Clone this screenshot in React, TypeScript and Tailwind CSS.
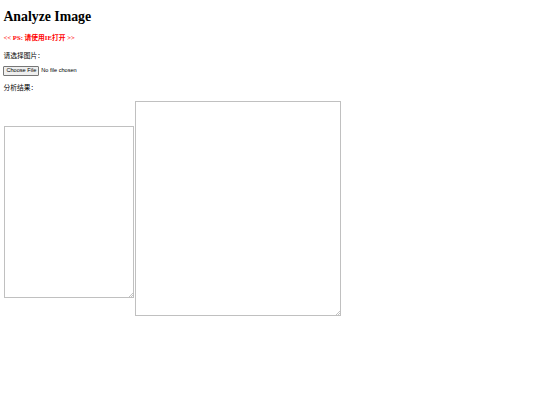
function Grip() {
  return (
    <svg className="pointer-events-none absolute right-[1px] bottom-[1px] h-[4px] w-[4px]" viewBox="0 0 4 4">
      <path d="M4 0L0 4M4 2L2 4" stroke="#9a9a9a" strokeWidth="0.6" />
    </svg>
  )
}

export default function App() {
  return (
    <div className="min-h-[405px] bg-white px-[3.4px] font-['Liberation_Serif','Noto_Sans_CJK_SC',serif] text-[6.75px] leading-[1.15] text-black">
      <h1 className="pt-[9px] text-[13.8px] leading-[1.15] font-bold">Analyze Image</h1>

      <p className="mt-[9px] font-bold text-[#ff0000]">&lt;&lt; PS: 请使用IE打开 &gt;&gt;</p>

      <p className="mt-[10px]">请选择图片：</p>

      <div className="mt-[6.5px] flex items-center gap-[2px] font-['Liberation_Sans',sans-serif] text-[5.6px] leading-none">
        <span className="rounded-[1px] border border-[#767676] bg-[#efefef] px-[2px] py-[1.5px]">Choose File</span>
        <span>No file chosen</span>
      </div>

      <p className="mt-[8px]">分析结果：</p>

      <div className="mt-[8.5px] flex items-start gap-[1px] pl-[1px]">
        <div className="relative mt-[25px]">
          <textarea className="block h-[172px] w-[130px] resize-none border border-[#c0c0c0] bg-white outline-none" />
          <Grip />
        </div>
        <div className="relative">
          <textarea className="block h-[215px] w-[206px] resize-none border border-[#c0c0c0] bg-white outline-none" />
          <Grip />
        </div>
      </div>
    </div>
  )
}
